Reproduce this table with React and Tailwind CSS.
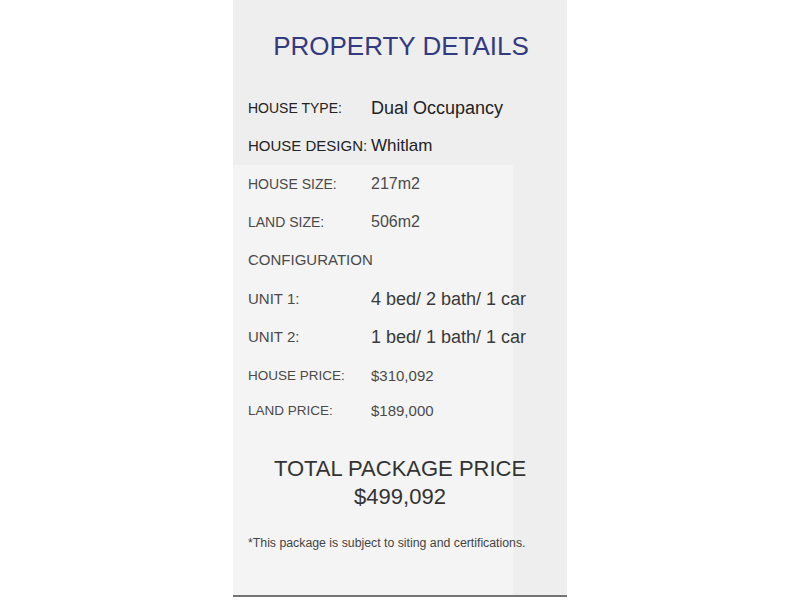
const rows = [
  { label: 'HOUSE TYPE:', value: 'Dual Occupancy', h: 'h-[38px]', lc: 'text-[14px] text-[#222]', vc: 'text-[18px] text-[#222]' },
  { label: 'HOUSE DESIGN:', value: 'Whitlam', h: 'h-[38px]', lc: 'text-[15px] text-[#222]', vc: 'text-[17px] text-[#222]' },
];

const lowerRows = [
  { label: 'HOUSE SIZE:', value: '217m2', h: 'h-[38px]', lc: 'text-[14px] text-[#4a4a4a]', vc: 'text-[16px] text-[#4a4a4a]' },
  { label: 'LAND SIZE:', value: '506m2', h: 'h-[38px]', lc: 'text-[14px] text-[#4a4a4a]', vc: 'text-[16px] text-[#4a4a4a]' },
  { label: 'CONFIGURATION', value: '', h: 'h-[39px]', lc: 'text-[15px] text-[#4a4a4a]', vc: '' },
  { label: 'UNIT 1:', value: '4 bed/ 2 bath/ 1 car', h: 'h-[38px]', lc: 'text-[15px] text-[#4a4a4a]', vc: 'text-[18px] text-[#3a3a3a]' },
  { label: 'UNIT 2:', value: '1 bed/ 1 bath/ 1 car', h: 'h-[38px]', lc: 'text-[15px] text-[#4a4a4a]', vc: 'text-[18px] text-[#3a3a3a]' },
  { label: 'HOUSE PRICE:', value: '$310,092', h: 'h-[40px]', lc: 'text-[13.5px] text-[#4a4a4a]', vc: 'text-[15px] text-[#4a4a4a]' },
  { label: 'LAND PRICE:', value: '$189,000', h: 'h-[30px]', lc: 'text-[13.5px] text-[#4a4a4a]', vc: 'text-[15px] text-[#4a4a4a]' },
];

function Row({ row }) {
  return (
    <div className={`${row.h} flex items-center whitespace-nowrap`}>
      <span className={`w-[123px] shrink-0 ${row.lc}`}>{row.label}</span>
      {row.value && <span className={row.vc}>{row.value}</span>}
    </div>
  );
}

export default function App() {
  return (
    <div className="w-[800px] h-[600px] bg-white font-['Liberation_Sans',Arial,sans-serif]">
      <div className="ml-[233px] w-[334px] h-[597px] flex flex-col bg-[#eeeeee] border-b-2 border-[#757575]">
        {/* Heading + first rows */}
        <div className="h-[89px] flex items-center justify-center">
          <h1 className="text-[26px] text-[#343a80] mt-[3px] ml-[2px]">PROPERTY DETAILS</h1>
        </div>
        <div className="pl-[15px]">
          {rows.map(r => <Row key={r.label} row={r} />)}
        </div>

        {/* Lighter lower block */}
        <div className="flex-1 flex flex-col pl-[15px] bg-[linear-gradient(to_right,#f4f4f4_280px,#eeeeee_280px)]">
          {lowerRows.map(r => <Row key={r.label} row={r} />)}

          <div className="mt-[29px] pr-[15px] flex flex-col items-center text-[22px] leading-[28px] text-[#333]">
            <span>TOTAL PACKAGE PRICE</span>
            <span>$499,092</span>
          </div>

          <p className="mt-[23px] text-[12.3px] text-[#444] whitespace-nowrap">
            *This package is subject to siting and certifications.
          </p>
        </div>
      </div>
    </div>
  );
}
